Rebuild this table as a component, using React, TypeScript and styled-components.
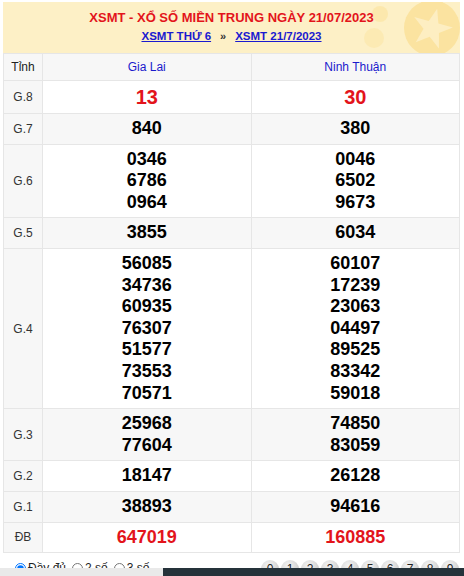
import React from "react";
import styled, { createGlobalStyle } from "styled-components";

const Global = createGlobalStyle`
  html, body { margin: 0; padding: 0; background: #fff; }
  body { font-family: Arial, "Liberation Sans", Helvetica, sans-serif; color: #222; }
`;

const Page = styled.div`
  width: 457px;
  margin: 2px 0 0 3px;
`;

const Header = styled.div`
  position: relative;
  height: 51px;
  background: #fdf0c6;
  display: flex;
  flex-direction: column;
  align-items: center;
  padding-top: 7px;
  box-sizing: border-box;
  overflow: hidden;
`;

const Title = styled.h1`
  position: relative;
  z-index: 1;
  margin: 0;
  font-size: 13px;
  line-height: 17px;
  font-weight: bold;
  color: #e3141b;
`;

const Links = styled.div`
  position: relative;
  z-index: 1;
  margin-top: 4px;
  display: flex;
  align-items: center;
  gap: 9px;
  font-size: 11.5px;
  font-weight: bold;
`;

const Link = styled.a`
  color: #1a1ad0;
  text-decoration: underline;
`;

const Sep = styled.span`
  color: #333;
  font-size: 11px;
`;

const Decor = styled.svg`
  position: absolute;
  right: 0;
  top: 0;
`;

const Table = styled.table`
  width: 100%;
  border-collapse: collapse;
  table-layout: fixed;
`;

const Row = styled.tr<{ $alt?: boolean }>`
  background: ${(p) => (p.$alt ? "#f7f7f7" : "#fff")};
`;

const HeadCell = styled.th<{ $w?: number }>`
  width: ${(p) => (p.$w ? `${p.$w}px` : "auto")};
  border: 1px solid #e6e6e6;
  padding: 6px 0;
  font-size: 12px;
  line-height: 14px;
  font-weight: normal;
  color: #1a1acc;
  background: #f7f7f7;
`;

const LabelHead = styled(HeadCell)`
  color: #222;
`;

const Label = styled.td`
  border: 1px solid #e6e6e6;
  padding: 4px 0;
  text-align: center;
  font-size: 12px;
  color: #333;
  background: #f7f7f7;
`;

const Cell = styled.td`
  border: 1px solid #e6e6e6;
  padding: 4px 0;
  text-align: center;
`;

const Num = styled.div<{ $red?: boolean; $big?: boolean }>`
  font-size: ${(p) => (p.$big ? 20 : 18)}px;
  line-height: 1.2;
  font-weight: bold;
  color: ${(p) => (p.$red ? "#e3141b" : "#000")};
`;

const Controls = styled.div`
  display: flex;
  justify-content: space-between;
  align-items: center;
  padding: 4px 0 0 9px;
  height: 22px;
`;

const Radios = styled.div`
  display: flex;
  align-items: center;
  font-size: 12px;
  color: #222;
`;

const RadioLabel = styled.label`
  display: flex;
  align-items: center;
  margin-right: 3px;
  input { margin: 0 2px 0 3px; width: 11px; height: 11px; }
`;

const Balls = styled.div`
  display: flex;
  gap: 2px;
  padding-right: 1px;
  margin-top: 2px;
`;

const Ball = styled.span`
  width: 18px;
  height: 18px;
  border-radius: 50%;
  background: radial-gradient(circle at 40% 30%, #f4f4f4 0%, #d6d6d6 55%, #a9a9a9 100%);
  font-size: 12px;
  line-height: 18px;
  text-align: center;
  color: #222;
`;

const BottomBar = styled.div`
  position: fixed;
  left: 0;
  right: 0;
  bottom: 0;
  height: 8px;
  display: flex;
`;

const BarLight = styled.div`
  width: 163px;
  background: #e9e9e9;
`;

const BarDark = styled.div`
  flex: 1;
  background: #25323a;
`;

type Prize = { label: string; a: string[]; b: string[]; red?: boolean; big?: boolean };

const prizes: Prize[] = [
  { label: "G.8", a: ["13"], b: ["30"], red: true, big: true },
  { label: "G.7", a: ["840"], b: ["380"] },
  { label: "G.6", a: ["0346", "6786", "0964"], b: ["0046", "6502", "9673"] },
  { label: "G.5", a: ["3855"], b: ["6034"] },
  {
    label: "G.4",
    a: ["56085", "34736", "60935", "76307", "51577", "73553", "70571"],
    b: ["60107", "17239", "23063", "04497", "89525", "83342", "59018"],
  },
  { label: "G.3", a: ["25968", "77604"], b: ["74850", "83059"] },
  { label: "G.2", a: ["18147"], b: ["26128"] },
  { label: "G.1", a: ["38893"], b: ["94616"] },
  { label: "ĐB", a: ["647019"], b: ["160885"], red: true },
];

export default function App() {
  return (
    <>
      <Global />
      <Page>
        <Header>
          <Decor width="110" height="51" viewBox="0 0 110 51">
            <circle cx="30" cy="12" r="8" fill="#fbe6a6" opacity="0.8" />
            <circle cx="24" cy="36" r="10" fill="#fbe6a6" opacity="0.6" />
            <circle cx="82" cy="26" r="28" fill="#fbe3a0" />
            <polygon
              points="82,6 87,20 102,20 90,29 94,44 82,35 70,44 74,29 62,20 77,20"
              fill="#fdeec2"
              transform="rotate(15 82 26)"
            />
          </Decor>
          <Title>XSMT - XỔ SỐ MIỀN TRUNG NGÀY 21/07/2023</Title>
          <Links>
            <Link href="#">XSMT THỨ 6</Link>
            <Sep>»</Sep>
            <Link href="#">XSMT 21/7/2023</Link>
          </Links>
        </Header>
        <Table>
          <thead>
            <tr>
              <LabelHead $w={38}>Tỉnh</LabelHead>
              <HeadCell>Gia Lai</HeadCell>
              <HeadCell>Ninh Thuận</HeadCell>
            </tr>
          </thead>
          <tbody>
            {prizes.map((p, i) => (
              <Row key={p.label} $alt={i % 2 === 1}>
                <Label>{p.label}</Label>
                <Cell>
                  {p.a.map((n) => (
                    <Num key={n} $red={p.red} $big={p.big}>{n}</Num>
                  ))}
                </Cell>
                <Cell>
                  {p.b.map((n) => (
                    <Num key={n} $red={p.red} $big={p.big}>{n}</Num>
                  ))}
                </Cell>
              </Row>
            ))}
          </tbody>
        </Table>
        <Controls>
          <Radios>
            <RadioLabel><input type="radio" name="m" defaultChecked />Đầy đủ</RadioLabel>
            <RadioLabel><input type="radio" name="m" />2 số</RadioLabel>
            <RadioLabel><input type="radio" name="m" />3 số</RadioLabel>
          </Radios>
          <Balls>
            {Array.from({ length: 10 }, (_, i) => (
              <Ball key={i}>{i}</Ball>
            ))}
          </Balls>
        </Controls>
      </Page>
      <BottomBar>
        <BarLight />
        <BarDark />
      </BottomBar>
    </>
  );
}
